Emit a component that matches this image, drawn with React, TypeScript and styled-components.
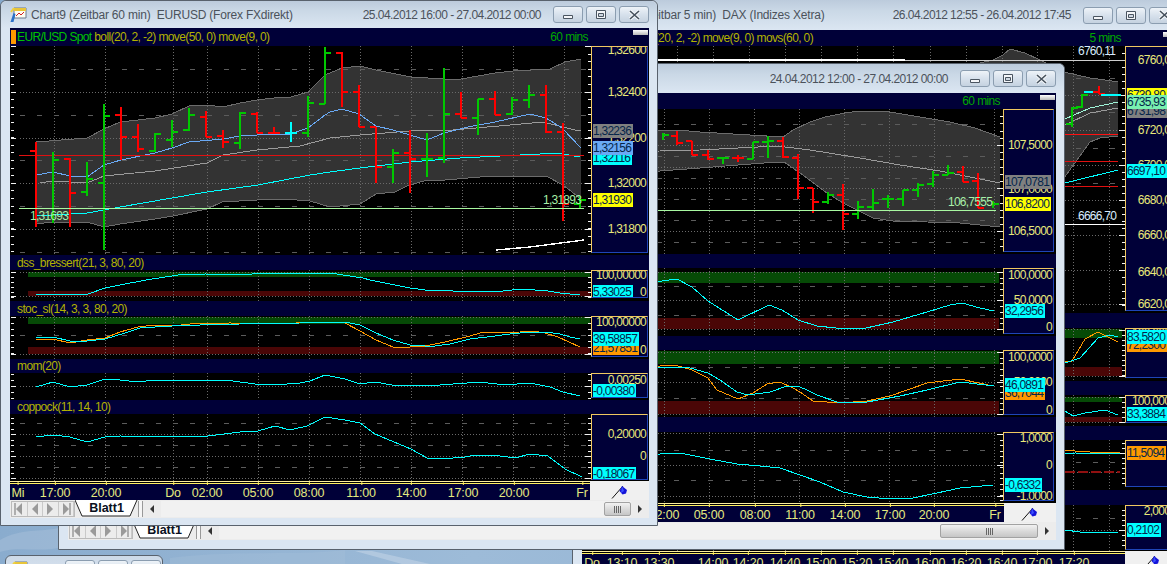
import React from 'react'
import styled, { createGlobalStyle } from 'styled-components'

const GlobalStyle = createGlobalStyle`
  html, body { margin: 0; padding: 0; width: 1167px; height: 564px; overflow: hidden; }
  body { font-family: "Liberation Sans", Arial, sans-serif; }
`

const Desktop = styled.div`
  position: relative;
  width: 1167px;
  height: 564px;
  overflow: hidden;
  background: linear-gradient(100deg, #86a9cc, #9dbbd8 45%, #8fb0d2);
`

const DesktopArt = styled.svg`
  position: absolute;
  left: 0;
  top: 0;
`

const WindowFrame = styled.section<{ $left: number; $top: number; $width: number; $height: number; $z: number }>`
  position: absolute;
  left: ${(p) => p.$left}px;
  top: ${(p) => p.$top}px;
  width: ${(p) => p.$width}px;
  height: ${(p) => p.$height}px;
  z-index: ${(p) => p.$z};
  box-sizing: border-box;
  display: flex;
  flex-direction: column;
  padding: 0 8px 0 9px;
  border: 1px solid #59626d;
  border-radius: 6px 6px 0 0;
  background: #dbe6f2;
`

const TitleBar = styled.header<{ $h: number }>`
  flex: none;
  height: ${(p) => p.$h}px;
  margin: 0 -8px 0 -9px;
  padding: 0 8px 0 9px;
  display: flex;
  align-items: center;
  gap: 4px;
  border-radius: 6px 6px 0 0;
  background: linear-gradient(#bccbdc, #cad8e6 35%, #dbe6f2);
  color: #4b525b;
  font-size: 12px;
`

const TitleText = styled.span`
  letter-spacing: -0.2px;
  white-space: pre;
`

const DateRange = styled.span`
  margin-left: auto;
  margin-right: 8px;
  letter-spacing: -0.55px;
  white-space: pre;
`

const Controls = styled.div`
  display: flex;
  gap: 3px;
`

const ControlButton = styled.button`
  width: 30px;
  height: 17px;
  padding: 0;
  display: flex;
  align-items: center;
  justify-content: center;
  border: 1px solid #8b9db0;
  border-radius: 3px;
  background: linear-gradient(#eef3f8, #d7e1ec 50%, #c5d2e0);
`

const ChartBody = styled.div`
  flex: none;
  display: flex;
  flex-direction: column;
  background: #000;
`

const PaneHeader = styled.div<{ $h: number; $pad: number }>`
  flex: none;
  height: ${(p) => p.$h}px;
  padding: 0 1px 0 ${(p) => p.$pad}px;
  box-sizing: border-box;
  display: flex;
  align-items: center;
  background: #000038;
  color: #b3b300;
  font-size: 12px;
  letter-spacing: -0.62px;
  white-space: pre;
`

const HeaderMark = styled.i`
  width: 5px;
  height: 14px;
  margin: 0 1px 0 -6px;
  background: #ff9a00;
`

const SymbolName = styled.span`
  color: #00c400;
`

const IntervalName = styled.span<{ $gap: number }>`
  margin-left: auto;
  margin-right: ${(p) => p.$gap}px;
  color: #00a800;
`

const CollapseButton = styled.span`
  position: absolute;
  right: 1px;
  top: 2px;
  width: 15px;
  height: 5px;
  background: linear-gradient(#fff, #b8b8b8);
`

const HeaderSlot = styled.div`
  position: relative;
  display: flex;
  flex-direction: column;
`

const PaneRow = styled.div<{ $h: number }>`
  flex: none;
  height: ${(p) => p.$h}px;
  display: flex;
`

const Plot = styled.svg`
  flex: none;
  display: block;
`

const PlotNote = styled.text<{ $fill?: string }>`
  font-family: "Liberation Sans", Arial, sans-serif;
  font-size: 12px;
  letter-spacing: -0.75px;
  fill: ${(p) => p.$fill || '#a8f0a8'};
`

const AxisPanel = styled.div<{ $w: number; $gap: number }>`
  position: relative;
  flex: none;
  width: ${(p) => p.$w}px;
  margin-right: 1px;
  margin-bottom: ${(p) => p.$gap}px;
  box-sizing: border-box;
  overflow: hidden;
  background: #000038;
  border-top: 1px solid #f0c860;
  border-left: 1px solid #f0c860;
  border-right: 1px solid #1f45b8;
  border-bottom: 1px solid #1f45b8;
`

const AxisLabel = styled.span`
  position: absolute;
  right: 1px;
  color: #e8e87a;
  font-size: 12px;
  letter-spacing: -0.75px;
  line-height: 14px;
  white-space: nowrap;
`

const AxisTag = styled.span<{ $bg: string }>`
  position: absolute;
  left: 1px;
  padding-right: 2px;
  background: ${(p) => p.$bg};
  color: #05254a;
  font-size: 12px;
  letter-spacing: -0.75px;
  line-height: 14px;
  white-space: nowrap;
`

const TimeRow = styled.div<{ $h: number }>`
  flex: none;
  height: ${(p) => p.$h}px;
  display: flex;
`

const TimeAxis = styled.div`
  position: relative;
  flex: 1;
  box-sizing: border-box;
  border-top: 1px solid #fff0a0;
  background: linear-gradient(#000 0, #000 1px, #fff060 1px, #fff060 2px, #000038 2px);
`

const TimeLabel = styled.span`
  position: absolute;
  top: 4px;
  transform: translateX(-50%);
  color: #e4ea80;
  font-size: 12.5px;
  letter-spacing: -0.2px;
  line-height: 14px;
  &::before {
    content: '';
    position: absolute;
    left: 50%;
    top: -4px;
    width: 1px;
    height: 3px;
    background: #fff060;
  }
`

const FlagBox = styled.div<{ $w: number }>`
  flex: none;
  width: ${(p) => p.$w}px;
  display: flex;
  align-items: center;
  justify-content: center;
  background: #f0f0f0;
`

const TabBar = styled.div`
  flex: none;
  height: 18px;
  display: flex;
  align-items: center;
  background: #ececec;
`

const NavGroup = styled.div`
  display: flex;
  margin-left: 1px;
  height: 16px;
  border: 1px solid #bbb;
  box-sizing: border-box;
`

const NavButton = styled.span`
  width: 15.5px;
  box-sizing: border-box;
  display: flex;
  align-items: center;
  justify-content: center;
  border-right: 1px solid #c9c9c9;
`

const SheetTab = styled.div`
  position: relative;
  width: 63px;
  height: 18px;
  margin-top: -1px;
  text-align: center;
  font-size: 12.5px;
  line-height: 16px;
  font-weight: bold;
  color: #0a1020;
`

const SheetShape = styled.svg`
  position: absolute;
  left: 0;
  top: 0;
  z-index: 0;
`

const SheetName = styled.span`
  position: relative;
`

const Splitter = styled.span`
  width: 3px;
  height: 16px;
  background: #f6f6f6;
  border-left: 1px solid #999;
  border-right: 1px solid #999;
`

const ScrollArrow = styled.span<{ $dir: 'left' | 'right' }>`
  width: 0;
  height: 0;
  margin: 0 7px;
  border-top: 4px solid transparent;
  border-bottom: 4px solid transparent;
  ${(p) => (p.$dir === 'left' ? 'border-right: 4px solid #333;' : 'border-left: 4px solid #333;')}
`

const ScrollTrack = styled.div`
  flex: 1;
  height: 16px;
  display: flex;
  justify-content: flex-end;
  background: #f1f1f1;
`

const ScrollThumb = styled.div<{ $w: number }>`
  width: ${(p) => p.$w}px;
  height: 14px;
  margin-top: 1px;
  box-sizing: border-box;
  display: flex;
  align-items: center;
  justify-content: center;
  gap: 1px;
  border: 1px solid #a2a2a2;
  border-radius: 2px;
  background: linear-gradient(#f2f2f2, #d8d8d8 55%, #c6c6c6);
  i {
    width: 1px;
    height: 7px;
    background: #666;
  }
`

const StubWindow = styled.section`
  position: absolute;
  left: 5px;
  top: 555px;
  z-index: 4;
  width: 158px;
  height: 30px;
  box-sizing: border-box;
  display: flex;
  justify-content: flex-end;
  padding: 4px 1px 0 5px;
  border: 1px solid #59626d;
  border-radius: 6px 6px 0 0;
  background: linear-gradient(#cddae8, #dbe6f2);
`

const StubIcon = styled.div`
  margin-right: auto;
`

type Bar = [number, number, number, number, number, string]

const poly = (pts: number[]) => {
  let d = ''
  for (let i = 0; i < pts.length; i += 2) d += (i ? 'L' : 'M') + pts[i] + ' ' + pts[i + 1]
  return d
}

const Line = ({ pts, c, w = 1 }: { pts: number[]; c: string; w?: number }) => (
  <path d={poly(pts)} fill="none" stroke={c} strokeWidth={w} />
)

const Bars = ({ data }: { data: Bar[] }) => (
  <g fill="none" strokeWidth={2}>
    {data.map(([x, h, l, o, c, col]) => (
      <path
        key={x}
        stroke={col === 'g' ? '#00c800' : col === 'r' ? '#ff0000' : '#00ffff'}
        d={`M${x} ${h}V${l}${o > 0 ? `M${x - 6} ${o}H${x}` : ''}${c > 0 ? `M${x} ${c}H${x + 6}` : ''}`}
      />
    ))}
  </g>
)

const Band = ({ upper, lower, fill = '#333' }: { upper: number[]; lower: number[]; fill?: string }) => {
  const back: number[] = []
  for (let i = lower.length - 2; i >= 0; i -= 2) back.push(lower[i], lower[i + 1])
  return <path d={poly([...upper, ...back]) + 'Z'} fill={fill} />
}

const Grid = ({ xs, x0, x1, y0, y1, dotted, dashed = [] }: {
  xs: number[]; x0: number; x1: number; y0: number; y1: number; dotted: number[]; dashed?: number[]
}) => (
  <g fill="none">
    {xs.map((x) => <path key={x} d={`M${x} ${y0}V${y1}`} stroke="#6a6a6a" strokeDasharray="1 2" />)}
    {dotted.map((y) => <path key={y} d={`M${x0} ${y}H${x1}`} stroke="#6a6a6a" strokeDasharray="1 2" />)}
    {dashed.map((y) => <path key={y} d={`M${x0} ${y}H${x1}`} stroke="#5c5c5c" strokeDasharray="5 12" />)}
  </g>
)

const Ticks = ({ xl, xr, y0, y1, step, major }: { xl: number; xr: number; y0: number; y1: number; step: number; major: number[] }) => {
  const minors: number[] = []
  for (let y = major[0]; y <= y1; y += step) minors.push(Math.round(y))
  for (let y = major[0] - step; y >= y0; y -= step) minors.push(Math.round(y))
  return (
    <g stroke="#f2f2f2" fill="none">
      {minors.map((y) => <path key={y} d={`M${xl} ${y}h3M${xr - 3} ${y}h3`} />)}
      {major.map((y) => <path key={'m' + y} d={`M${xl} ${y}h5M${xr - 6} ${y}h6`} />)}
    </g>
  )
}

type AxisMark = [string, number]
type AxisTagMark = [string, number, string]
type PaneSpec = {
  title: React.ReactNode
  head: number
  headPad?: number
  h: number
  y: number
  axisGap: number
  labels: AxisMark[]
  tags: AxisTagMark[]
  art: React.ReactNode
  right?: React.ReactNode
}

const GREEN_TAG = '#78f0b0'
const CYAN = '#00ffff'
const ORANGE = '#ff9900'
const YELLOW = '#ffff00'
const GREY = '#808080'
const BLUE = '#6aa9f4'

const Pane = ({ spec, x0, plotW, axisW }: { spec: PaneSpec; x0: number; plotW: number; axisW: number }) => (
  <>
    <HeaderSlot>
      <PaneHeader $h={spec.head} $pad={spec.headPad ?? 7}>
        {spec.title}
        {spec.right}
      </PaneHeader>
      {spec.right ? <CollapseButton /> : null}
    </HeaderSlot>
    <PaneRow $h={spec.h}>
      <Plot width={plotW} height={spec.h} viewBox={`${x0} ${spec.y} ${plotW} ${spec.h}`} shapeRendering="crispEdges">
        {spec.art}
      </Plot>
      <AxisPanel $w={axisW} $gap={spec.axisGap}>
        {spec.labels.map(([t, y]) => (
          <AxisLabel key={t} style={{ top: y - spec.y - 8 }}>{t}</AxisLabel>
        ))}
        {spec.tags.map(([t, y, bg]) => (
          <AxisTag key={t} $bg={bg} style={{ top: y - spec.y - 8 }}>{t}</AxisTag>
        ))}
      </AxisPanel>
    </PaneRow>
  </>
)

const Flag = () => (
  <svg width="18" height="16" viewBox="0 0 18 16">
    <path d="M1 15.5L12 3" stroke="#111" strokeWidth="1" fill="none" />
    <path d="M11 3l5 4-1 3.5-3.5 1-3-3.5z" fill="#1414d8" />
    <path d="M11 3l2 5-3 2" fill="#3c50ff" />
  </svg>
)

const AppIcon = () => (
  <svg width="17" height="17" viewBox="0 0 17 17">
    <path d="M4 2h12v10H4z" fill="#fdfdf2" stroke="#6a7a90" />
    <path d="M4 2h12v3H4z" fill="#e8c53a" />
    <path d="M6 10l3-3 2 2 3-3" fill="none" stroke="#d02020" />
    <path d="M0.5 16l3-9 2 1-2 8z" fill="#2b70c8" />
    <path d="M1 6l3-4" stroke="#f0d040" strokeWidth="2" />
  </svg>
)

const WindowControls = () => (
  <Controls>
    <ControlButton aria-label="minimieren">
      <svg width="12" height="9" viewBox="0 0 12 9"><path d="M1.5 5.5h9v3h-9z" fill="#f4f6f9" stroke="#4a5561" /></svg>
    </ControlButton>
    <ControlButton aria-label="maximieren">
      <svg width="12" height="9" viewBox="0 0 12 9"><path d="M1.5.5h9v8h-9z" fill="#f4f6f9" stroke="#4a5561" /><path d="M3.5 3.5h5v3h-5z" fill="#cfd8e2" stroke="#4a5561" /></svg>
    </ControlButton>
    <ControlButton aria-label="schliessen">
      <svg width="13" height="10" viewBox="0 0 13 10"><path d="M2 1l9 8M11 1l-9 8" stroke="#f6f8fa" strokeWidth="3.4" /><path d="M2 1l9 8M11 1l-9 8" stroke="#46515d" strokeWidth="1.6" /></svg>
    </ControlButton>
  </Controls>
)

const Tri = ({ d, stop }: { d: 'l' | 'r'; stop?: boolean }) => (
  <svg width="10" height="12" viewBox="0 0 10 12">
    <path d={d === 'l' ? 'M8 0v12L2 6z' : 'M2 0v12l6-6z'} fill="#9a9a9a" />
    {stop ? <path d={d === 'l' ? 'M1 0v12' : 'M9 0v12'} stroke="#9a9a9a" strokeWidth="1.5" /> : null}
  </svg>
)

const SheetBar = ({ thumb }: { thumb: number }) => (
  <TabBar>
    <NavGroup>
      <NavButton><Tri d="l" stop /></NavButton>
      <NavButton><Tri d="l" /></NavButton>
      <NavButton><Tri d="r" /></NavButton>
      <NavButton><Tri d="r" stop /></NavButton>
    </NavGroup>
    <SheetTab>
      <SheetShape width="63" height="18" viewBox="0 0 63 18">
        <path d="M0 0L7 16H55L62 0" fill="#fff" stroke="#222" />
      </SheetShape>
      <SheetName>Blatt1</SheetName>
    </SheetTab>
    <Splitter />
    <ScrollArrow $dir="left" />
    <ScrollTrack>
      <ScrollThumb $w={thumb}><i /><i /><i /><i /></ScrollThumb>
    </ScrollTrack>
    <ScrollArrow $dir="right" />
  </TabBar>
)

type TimeMark = [string, number]

const ChartWindow = ({ left, top, width, height, z, titleH, title, date, panes, x0, plotW, axisW, timeH, timeMarks, flagW, thumb }: {
  left: number; top: number; width: number; height: number; z: number; titleH: number
  title: string; date: string; panes: PaneSpec[]; x0: number; plotW: number; axisW: number
  timeH: number; timeMarks: TimeMark[]; flagW: number; thumb: number
}) => (
  <WindowFrame $left={left} $top={top} $width={width} $height={height} $z={z}>
    <TitleBar $h={titleH}>
      <AppIcon />
      <TitleText>{title}</TitleText>
      <DateRange>{date}</DateRange>
      <WindowControls />
    </TitleBar>
    <ChartBody>
      {panes.map((p) => <Pane key={p.y} spec={p} x0={x0} plotW={plotW} axisW={axisW} />)}
      <TimeRow $h={timeH}>
        <TimeAxis>
          {timeMarks.map(([t, x]) => <TimeLabel key={t + x} style={{ left: x - x0 }}>{t}</TimeLabel>)}
        </TimeAxis>
        <FlagBox $w={flagW}><Flag /></FlagBox>
      </TimeRow>
    </ChartBody>
    <SheetBar thumb={thumb} />
  </WindowFrame>
)

/* window 1: EURUSD 60 min */

const W1_XS = [54, 105, 173, 207, 258, 309, 360, 411, 462, 513, 564]

const W1_BARS: Bar[] = [
  [36, 142, 227, 151, -1, 'r'], [53, 152, 223, -1, 160, 'g'], [70, 158, 227, 159, 193, 'r'], [87, 162, 196, 192, 179, 'g'],
  [104, 104, 250, 183, 116, 'g'], [121, 107, 160, 115, 137, 'r'], [138, 124, 152, 137, 149, 'r'], [155, 133, 152, 151, 134, 'g'],
  [172, 120, 147, 140, 132, 'g'], [189, 108, 131, 130, 115, 'g'], [206, 111, 137, 117, 137, 'r'], [223, 130, 148, 136, 142, 'r'],
  [240, 112, 149, 143, 113, 'g'], [257, 112, 133, 114, 133, 'r'], [274, 127, 133, 133, 133, 'r'], [291, 122, 142, 133, 133, 'c'],
  [308, 96, 137, 133, 103, 'g'], [325, 47, 104, 104, 53, 'g'], [342, 52, 107, 53, 92, 'r'], [359, 85, 127, 92, 127, 'r'],
  [376, 127, 183, 127, 167, 'r'], [393, 149, 183, 167, 153, 'g'], [410, 130, 193, 153, 159, 'r'], [427, 133, 177, 159, 159, 'g'],
  [444, 68, 163, 158, 114, 'g'], [461, 92, 118, 114, 118, 'r'], [478, 99, 135, 118, 99, 'g'], [495, 91, 115, 99, 115, 'r'],
  [512, 97, 115, 114, 100, 'g'], [529, 85, 108, 100, 95, 'g'], [546, 85, 133, 95, 132, 'r'], [563, 123, 221, 132, 204, 'r'],
  [580, 196, 208, 204, 200, 'g'],
]

const W1_UPPER = [36, 142, 87, 138, 104, 129, 120, 122, 138, 120, 155, 118, 172, 114, 189, 106, 206, 105, 223, 107, 240, 103, 257, 100, 274, 98, 291, 97, 308, 92, 325, 75, 342, 68, 360, 66, 376, 70, 411, 77, 444, 79, 461, 79, 478, 76, 495, 73, 513, 71, 550, 69, 565, 62, 581, 59]
const W1_LOWER = [36, 224, 53, 222, 87, 222, 104, 227, 120, 224, 155, 219, 173, 216, 207, 209, 222, 202, 257, 200, 283, 199, 310, 201, 330, 207, 360, 204, 376, 194, 395, 192, 407, 186, 427, 180, 445, 180, 480, 177, 513, 176, 546, 176, 563, 185, 581, 199]

const W1_MAIN = (
  <>
    <Band upper={W1_UPPER} lower={W1_LOWER} />
    <Grid xs={W1_XS} x0={20} x1={586} y0={46} y1={255} dotted={[92, 138, 183, 229]} dashed={[69, 115, 160, 206, 252]} />
    <Ticks xl={11} xr={591} y0={46} y1={255} step={7.6} major={[46, 92, 138, 183, 229]} />
    <Line pts={W1_UPPER} c="#6c6c6c" />
    <Line pts={W1_LOWER} c="#6c6c6c" />
    <Line pts={[40, 183, 53, 181, 87, 183, 104, 176, 155, 171, 207, 163, 223, 155, 257, 150, 300, 146, 330, 138, 360, 135, 410, 131, 453, 130, 510, 125, 543, 122, 575, 130, 581, 131]} c="#9b9b9b" />
    <Line pts={[36, 216, 87, 213, 104, 210, 120, 207, 172, 198, 207, 192, 258, 185, 310, 175, 330, 172, 360, 168, 410, 162, 460, 158, 520, 155, 540, 154, 558, 153, 580, 157]} c="#00ffff" />
    <Line pts={[36, 175, 53, 172, 70, 176, 87, 177, 104, 165, 121, 160, 155, 153, 172, 148, 189, 142, 223, 139, 240, 136, 257, 135, 290, 134, 308, 128, 325, 115, 330, 112, 342, 109, 359, 114, 376, 126, 393, 130, 427, 140, 444, 133, 468, 127, 495, 122, 530, 114, 546, 118, 562, 128, 581, 148]} c="#6aa9f4" />
    <Line pts={[19, 155, 584, 155]} c="#e01010" />
    <Line pts={[496, 250, 530, 247, 584, 240]} c="#ffffff" w={1.4} />
    <Bars data={W1_BARS} />
    <Line pts={[19, 208, 584, 208]} c="#a8f8a0" />
    <PlotNote x={30} y={220}>1,31693</PlotNote>
    <PlotNote x={543} y={204}>1,31893</PlotNote>
  </>
)

const w1Panes: PaneSpec[] = [
  {
    title: (
      <>
        <HeaderMark />
        <SymbolName>EUR/USD Spot</SymbolName> boll(20, 2, -2) move(50, 0) move(9, 0)
      </>
    ),
    right: <IntervalName $gap={60}>60 mins</IntervalName>,
    head: 18, y: 46, h: 209, axisGap: 2,
    labels: [['1,32600', 50], ['1,32400', 92], ['1,32200', 138], ['1,32000', 183], ['1,31800', 229]],
    tags: [['1,32236', 131, GREY], ['1,32116', 158, CYAN], ['1,32156', 148, BLUE], ['1,31930', 200, YELLOW]],
    art: W1_MAIN,
  },
  {
    title: 'dss_bressert(21, 3, 80, 20)', head: 15, y: 270, h: 31, axisGap: 3,
    labels: [['100,00000', 275], ['0', 292]],
    tags: [['5,33025', 292, CYAN]],
    art: (
      <>
        <path d="M28 274.5H590" stroke="#064a06" strokeWidth="5" />
        <path d="M28 293.5H590" stroke="#4a0606" strokeWidth="5" />
        <Grid xs={W1_XS} x0={20} x1={586} y0={270} y1={301} dotted={[272, 296]} />
        <Ticks xl={11} xr={591} y0={270} y1={300} step={5} major={[272, 296]} />
        <Line pts={[36, 294, 88, 294, 105, 288, 120, 285, 146, 280, 178, 275, 205, 274, 240, 275, 265, 273, 330, 273, 363, 278, 370, 280, 410, 288, 425, 290, 453, 291, 503, 291, 522, 289, 548, 291, 560, 293, 580, 295]} c="#00ffff" />
      </>
    ),
  },
  {
    title: 'stoc_sl(14, 3, 3, 80, 20)', head: 15, y: 316, h: 43, axisGap: 2,
    labels: [['100,00000', 322], ['0', 350]],
    tags: [['21,57851', 348, ORANGE], ['39,58857', 339, CYAN]],
    art: (
      <>
        <path d="M28 320.5H590" stroke="#064a06" strokeWidth="7" />
        <path d="M28 350.5H590" stroke="#4a0606" strokeWidth="7" />
        <Grid xs={W1_XS} x0={20} x1={586} y0={316} y1={359} dotted={[317, 354]} dashed={[335]} />
        <Ticks xl={11} xr={591} y0={316} y1={358} step={6} major={[317, 354]} />
        <Line pts={[36, 339, 53, 339, 70, 343, 87, 340, 105, 338, 120, 332, 138, 327, 155, 325, 172, 326, 190, 324, 230, 323, 282, 324, 310, 322, 330, 322, 345, 323, 360, 331, 376, 340, 393, 347, 410, 347, 425, 346, 445, 342, 470, 336, 480, 333, 520, 332, 533, 331, 545, 333, 558, 337, 580, 347]} c="#ff9900" />
        <Line pts={[36, 337, 53, 337, 70, 341, 87, 341, 105, 339, 125, 333, 140, 328, 155, 327, 172, 326, 200, 325, 240, 324, 300, 323, 330, 322, 345, 322, 360, 325, 376, 333, 393, 340, 410, 345, 425, 346, 435, 346, 450, 344, 470, 339, 495, 336, 510, 334, 530, 332, 545, 332, 560, 334, 570, 337, 580, 339]} c="#00ffff" />
      </>
    ),
  },
  {
    title: 'mom(20)', head: 14, y: 373, h: 27, axisGap: 2,
    labels: [['0,00250', 380]],
    tags: [['-0,00380', 391, CYAN]],
    art: (
      <>
        <Grid xs={W1_XS} x0={20} x1={586} y0={373} y1={400} dotted={[386]} />
        <Ticks xl={11} xr={591} y0={374} y1={398} step={6} major={[386]} />
        <Line pts={[36, 387, 53, 382, 70, 387, 87, 385, 105, 379, 120, 380, 138, 382, 155, 380, 190, 380, 200, 381, 225, 380, 255, 384, 275, 385, 300, 383, 310, 381, 325, 375, 345, 379, 360, 384, 375, 382, 392, 385, 440, 385, 480, 382, 505, 385, 530, 383, 540, 385, 550, 387, 563, 392, 580, 396]} c="#00ffff" />
      </>
    ),
  },
  {
    title: 'coppock(11, 14, 10)', head: 14, y: 414, h: 67, axisGap: 1,
    labels: [['0,20000', 434], ['0', 456]],
    tags: [['-0,18067', 474, CYAN]],
    art: (
      <>
        <Grid xs={W1_XS} x0={20} x1={586} y0={414} y1={481} dotted={[434, 456, 478]} dashed={[423, 445, 467]} />
        <Ticks xl={11} xr={591} y0={416} y1={480} step={5.5} major={[434, 456, 478]} />
        <Line pts={[36, 437, 53, 435, 70, 437, 87, 442, 105, 437, 120, 436, 190, 437, 208, 436, 240, 432, 258, 431, 275, 426, 290, 430, 307, 426, 325, 417, 345, 420, 360, 423, 375, 434, 411, 449, 427, 458, 453, 458, 465, 457, 475, 455, 500, 456, 515, 458, 530, 454, 548, 456, 565, 469, 582, 477]} c="#00ffff" />
      </>
    ),
  },
]

const w1Times: TimeMark[] = [['Mi', 18], ['17:00', 55], ['20:00', 106], ['Do', 173], ['02:00', 207], ['05:00', 258], ['08:00', 309], ['11:00', 361], ['14:00', 411], ['17:00', 463], ['20:00', 514], ['Fr', 582]]

/* window 2: FX future 60 min, mostly hidden on the left */

const W2_XS = [664, 709, 754, 799, 844, 889, 934, 994]

const W2_BARS: Bar[] = [
  [663, 133, 140, -1, 135, 'g'], [677, 131, 145, 136, 143, 'r'], [692, 141, 155, 141, 155, 'r'], [708, 150, 160, 155, 159, 'r'],
  [723, 157, 164, 158, 158, 'g'], [738, 155, 162, 158, 158, 'r'], [753, 142, 159, 159, 142, 'g'], [768, 136, 158, 142, 141, 'g'],
  [783, 137, 158, 141, 157, 'r'], [798, 154, 199, 158, 188, 'r'], [813, 188, 213, 188, 202, 'r'], [828, 192, 204, 202, 195, 'g'],
  [843, 184, 230, 195, 214, 'r'], [858, 201, 219, 214, 207, 'g'], [873, 189, 210, 207, 203, 'g'], [888, 195, 208, 199, 199, 'g'],
  [903, 190, 206, 199, 190, 'g'], [918, 183, 197, 190, 185, 'g'], [933, 171, 187, 184, 175, 'g'], [948, 165, 175, 175, 173, 'g'],
  [963, 166, 182, 172, 182, 'r'], [978, 173, 208, 181, 208, 'r'], [993, 201, 208, -1, 204, 'g'],
]

const W2_UPPER = [600, 130, 677, 130, 700, 132, 783, 137, 793, 130, 810, 122, 825, 117, 845, 113, 860, 111, 890, 112, 920, 117, 950, 122, 975, 128, 1000, 137]
const W2_LOWER = [600, 171, 660, 171, 700, 168, 777, 162, 784, 162, 800, 173, 827, 193, 843, 203, 873, 218, 893, 221, 927, 222, 960, 223, 1000, 227]

const w2Panes: PaneSpec[] = [
  {
    title: 'FGBL boll(20, 2, -2) move(9, 0)',
    right: <IntervalName $gap={55}>60 mins</IntervalName>,
    head: 16, y: 109, h: 145, axisGap: 2,
    labels: [['107,5000', 145], ['107,0000', 189], ['106,5000', 231]],
    tags: [['107,0781', 182, GREY], ['106,8200', 204, YELLOW]],
    art: (
      <>
        <Band upper={W2_UPPER} lower={W2_LOWER} />
        <Grid xs={W2_XS} x0={640} x1={996} y0={109} y1={254} dotted={[145, 167, 188, 210, 231]} dashed={[124, 156, 178, 199, 220, 242]} />
        <Ticks xl={60} xr={1003} y0={111} y1={252} step={7.2} major={[145, 188, 231]} />
        <Line pts={W2_UPPER} c="#6c6c6c" />
        <Line pts={W2_LOWER} c="#6c6c6c" />
        <Line pts={[600, 152, 660, 151, 700, 150, 777, 146, 810, 150, 860, 158, 900, 165, 940, 171, 1000, 183]} c="#9b9b9b" />
        <Bars data={W2_BARS} />
        <Line pts={[640, 210, 996, 210]} c="#a8f8a0" />
        <PlotNote x={948} y={206}>106,7555</PlotNote>
      </>
    ),
  },
  {
    title: 'dss_bressert(21, 3, 80, 20)', head: 14, y: 268, h: 68, axisGap: 2,
    labels: [['100,0000', 275], ['50,0000', 300], ['0', 327]],
    tags: [['32,2956', 311, CYAN]],
    art: (
      <>
        <path d="M68 277.5H999" stroke="#064a06" strokeWidth="11" />
        <path d="M68 323.5H999" stroke="#4a0606" strokeWidth="11" />
        <Grid xs={W2_XS} x0={640} x1={996} y0={268} y1={336} dotted={[272, 300, 329]} dashed={[286, 315]} />
        <Ticks xl={60} xr={1003} y0={270} y1={332} step={5.7} major={[272, 300, 329]} />
        <Line pts={[640, 285, 662, 281, 677, 279, 692, 287, 708, 301, 738, 320, 769, 305, 782, 310, 798, 320, 817, 326, 836, 328, 866, 328, 893, 322, 927, 312, 950, 305, 962, 303, 980, 308, 994, 311]} c="#00ffff" />
      </>
    ),
  },
  {
    title: 'stoc_sl(14, 3, 3, 80, 20)', head: 14, y: 350, h: 67, axisGap: 2,
    labels: [['100,0000', 357], ['50,0000', 382], ['0', 410]],
    tags: [['36,7044', 393, ORANGE], ['46,0891', 385, CYAN]],
    art: (
      <>
        <path d="M68 357.5H999" stroke="#064a06" strokeWidth="13" />
        <path d="M68 407.5H999" stroke="#4a0606" strokeWidth="13" />
        <Grid xs={W2_XS} x0={640} x1={996} y0={350} y1={417} dotted={[352, 382, 414]} dashed={[367, 398]} />
        <Ticks xl={60} xr={1003} y0={352} y1={414} step={5.7} major={[352, 382, 414]} />
        <Line pts={[640, 367, 660, 366, 675, 365, 692, 370, 708, 378, 717, 390, 738, 399, 753, 393, 767, 384, 780, 382, 793, 388, 800, 392, 813, 401, 840, 403, 867, 401, 890, 396, 927, 383, 960, 379, 993, 386]} c="#ff9900" />
        <Line pts={[640, 368, 660, 367, 690, 368, 708, 373, 720, 380, 737, 392, 748, 395, 770, 392, 787, 386, 800, 387, 807, 390, 817, 395, 837, 402, 867, 402, 900, 396, 927, 390, 960, 382, 994, 386]} c="#00ffff" />
      </>
    ),
  },
  {
    title: 'coppock(11, 14, 10)', head: 15, y: 432, h: 71, axisGap: 2,
    labels: [['1,0000', 438], ['0', 465], ['-1,0000', 496]],
    tags: [['-0,6332', 485, CYAN]],
    art: (
      <>
        <Grid xs={W2_XS} x0={640} x1={996} y0={432} y1={503} dotted={[433, 465, 496]} dashed={[450, 480]} />
        <Ticks xl={60} xr={1003} y0={434} y1={500} step={5.5} major={[434, 465, 496]} />
        <Line pts={[640, 456, 660, 454, 680, 453, 710, 459, 737, 464, 760, 466, 780, 468, 800, 475, 820, 482, 843, 492, 867, 497, 890, 499, 913, 498, 937, 493, 960, 488, 993, 485]} c="#00ffff" />
      </>
    ),
  },
]

const w2Times: TimeMark[] = [['Do', 620], ['02:00', 664], ['05:00', 709], ['08:00', 755], ['11:00', 800], ['14:00', 845], ['17:00', 890], ['20:00', 934], ['Fr', 995]]

/* window 3: DAX 5 min, sits at the back */

const W3_XS = [677, 713, 749, 785, 821, 857, 893, 930, 966, 1002, 1037, 1073, 1109]

const W3_BARS: Bar[] = [
  [1072, 107, 127, 124, 108, 'g'], [1082, 94, 108, 107, 95, 'g'], [1090, 91, 93, 92, 92, 'c'], [1099, 86, 94, 92, 94, 'r'],
  [1107, 94, 96, 95, 95, 'c'], [1115, 94, 96, 95, 95, 'c'],
]

const W3_UPPER = [940, 72, 993, 60, 1003, 55, 1010, 49, 1025, 53, 1040, 60, 1064, 72, 1090, 78, 1105, 80, 1118, 82]
const W3_LOWER = [940, 100, 993, 100, 1040, 150, 1064, 178, 1090, 142, 1100, 138, 1118, 136]

const w3Panes: PaneSpec[] = [
  {
    title: <><SymbolName>DAX</SymbolName> boll(20, 2, -2) move(9, 0) movs(60, 0)</>,
    right: <IntervalName $gap={57}>5 mins</IntervalName>,
    head: 16, headPad: 31, y: 46, h: 267, axisGap: 2,
    labels: [['6760,00', 60], ['6740,00', 95], ['6720,00', 130], ['6700,00', 165], ['6680,00', 200], ['6660,00', 235], ['6640,00', 272], ['6620,00', 304]],
    tags: [['6731,98', 111, GREY], ['6739,80', 95, YELLOW], ['6735,93', 102, GREEN_TAG], ['6697,10', 171, CYAN]],
    art: (
      <>
        <Band upper={W3_UPPER} lower={W3_LOWER} />
        <Grid xs={W3_XS} x0={600} x1={1120} y0={46} y1={313} dotted={[95, 130, 165, 200, 235, 270, 304]} dashed={[78, 112, 148, 183, 218]} />
        <Ticks xl={584} xr={1125} y0={48} y1={311} step={7} major={[60, 95, 130, 165, 200, 235, 270, 304]} />
        <Line pts={W3_UPPER} c="#6c6c6c" />
        <Line pts={[1064, 178, 1090, 142, 1100, 138, 1118, 136]} c="#6c6c6c" />
        <Line pts={[600, 60, 905, 60]} c="#fff" w={2} />
        <Line pts={[905, 60, 1125, 60]} c="#cfcfcf" />
        <Line pts={[1065, 224, 1125, 224]} c="#fff" />
        <Line pts={[1065, 134, 1118, 134]} c="#ff1010" />
        <Line pts={[1065, 161, 1118, 161]} c="#e01010" />
        <Line pts={[1065, 186, 1118, 186]} c="#e01010" />
        <Line pts={[1065, 183, 1118, 170]} c="#00ffff" />
        <Line pts={[1065, 125, 1090, 113, 1118, 108]} c="#9b9b9b" />
        <Line pts={[1065, 119, 1090, 108, 1118, 102]} c="#9ff5d8" />
        <Bars data={W3_BARS} />
        <PlotNote x={1078} y={55} $fill="#d8ecff">6760,11</PlotNote>
        <PlotNote x={1078} y={220} $fill="#d8ecff">6666,70</PlotNote>
      </>
    ),
  },
  {
    title: 'dss_bressert(21, 3, 80, 20)', head: 15, y: 328, h: 53, axisGap: 3,
    labels: [['100,0000', 333]],
    tags: [['72,2300', 345, ORANGE], ['83,5820', 337, CYAN]],
    art: (
      <>
        <path d="M620 333.5H1122" stroke="#064a06" strokeWidth="9" />
        <path d="M620 371.5H1122" stroke="#4a0606" strokeWidth="9" />
        <Grid xs={W3_XS} x0={600} x1={1120} y0={328} y1={381} dotted={[329, 376]} />
        <Ticks xl={584} xr={1125} y0={330} y1={378} step={5} major={[330, 376]} />
        <Line pts={[1065, 362, 1072, 361, 1085, 339, 1098, 332, 1118, 342]} c="#ff9900" />
        <Line pts={[1065, 363, 1080, 358, 1098, 338, 1110, 335, 1118, 337]} c="#00ffff" />
      </>
    ),
  },
  {
    title: 'stoc_sl(14, 3, 3, 80, 20)', head: 14, y: 395, h: 31, axisGap: 3,
    labels: [['100,0000', 401]],
    tags: [['33,3884', 414, CYAN]],
    art: (
      <>
        <path d="M620 399.5H1122" stroke="#064a06" strokeWidth="5" />
        <path d="M620 419.5H1122" stroke="#4a0606" strokeWidth="5" />
        <Grid xs={W3_XS} x0={600} x1={1120} y0={395} y1={426} dotted={[397, 422]} />
        <Ticks xl={584} xr={1125} y0={396} y1={424} step={5} major={[397, 422]} />
        <Line pts={[1065, 411, 1073, 416, 1085, 413, 1105, 410, 1118, 415]} c="#00ffff" />
      </>
    ),
  },
  {
    title: 'mom(20)', head: 14, y: 440, h: 50, axisGap: 3,
    labels: [],
    tags: [['11,5094', 453, ORANGE]],
    art: (
      <>
        <Grid xs={W3_XS} x0={600} x1={1120} y0={440} y1={490} dotted={[453, 472]} dashed={[462]} />
        <Ticks xl={584} xr={1125} y0={442} y1={486} step={5} major={[453]} />
        <Line pts={[1065, 450, 1075, 451, 1090, 452, 1120, 453]} c="#ff9900" />
        <Line pts={[1065, 454, 1075, 453, 1120, 454]} c="#00ffff" />
        <path d="M1065 472H1120" stroke="#901010" strokeWidth="2" strokeDasharray="10 3" />
      </>
    ),
  },
  {
    title: 'coppock(11, 14, 10)', head: 15, y: 505, h: 46, axisGap: 1,
    labels: [['2,0000', 511]],
    tags: [['0,2102', 530, CYAN]],
    art: (
      <>
        <Grid xs={W3_XS} x0={600} x1={1120} y0={505} y1={551} dotted={[530]} dashed={[518]} />
        <Ticks xl={584} xr={1125} y0={507} y1={549} step={5} major={[530]} />
        <Line pts={[1065, 530, 1080, 532, 1118, 532]} c="#00ffff" />
      </>
    ),
  },
]

const w3Times: TimeMark[] = [['Do', 592], ['13:10', 622], ['13:30', 659], ['14:00', 713], ['14:20', 748], ['14:40', 785], ['15:00', 821], ['15:20', 857], ['15:40', 893], ['16:00', 930], ['16:20', 966], ['16:40', 1002], ['17:00', 1037], ['17:20', 1074]]

const App = () => (
  <>
    <GlobalStyle />
    <Desktop>
      <DesktopArt width="1167" height="564" viewBox="0 0 1167 564">
        <path d="M355 551L402 564H430L372 551Z" fill="#c4d6e8" opacity="0.55" />
        <path d="M0 540C20 528 42 532 58 528V548C40 552 16 546 0 552Z" fill="#a7c0da" opacity="0.5" />
        <path d="M170 558C230 550 300 556 345 550V564H170Z" fill="#a7c0da" opacity="0.35" />
      </DesktopArt>
      <ChartWindow
        left={572} top={-1} width={616} height={620} z={1}
        titleH={30}
        title="Chart7 (Zeitbar 5 min)  DAX (Indizes Xetra)"
        date="26.04.2012 12:55 - 26.04.2012 17:45"
        panes={w3Panes} x0={582} plotW={543} axisW={53}
        timeH={19} timeMarks={w3Times} flagW={54} thumb={90}
      />
      <ChartWindow
        left={58} top={63} width={1007} height={487} z={2}
        titleH={29}
        title="Chart8 (Zeitbar 60 min)  FGBL (Futures)"
        date="24.04.2012 12:00 - 27.04.2012 00:00"
        panes={w2Panes} x0={68} plotW={935} axisW={51}
        timeH={19} timeMarks={w2Times} flagW={52} thumb={98}
      />
      <ChartWindow
        left={0} top={0} width={658} height={526} z={3}
        titleH={27}
        title="Chart9 (Zeitbar 60 min)  EURUSD (Forex FXdirekt)"
        date="25.04.2012 16:00 - 27.04.2012 00:00"
        panes={w1Panes} x0={10} plotW={581} axisW={57}
        timeH={19} timeMarks={w1Times} flagW={59} thumb={27}
      />
      <StubWindow>
        <StubIcon><AppIcon /></StubIcon>
        <WindowControls />
      </StubWindow>
    </Desktop>
  </>
)

export default App
